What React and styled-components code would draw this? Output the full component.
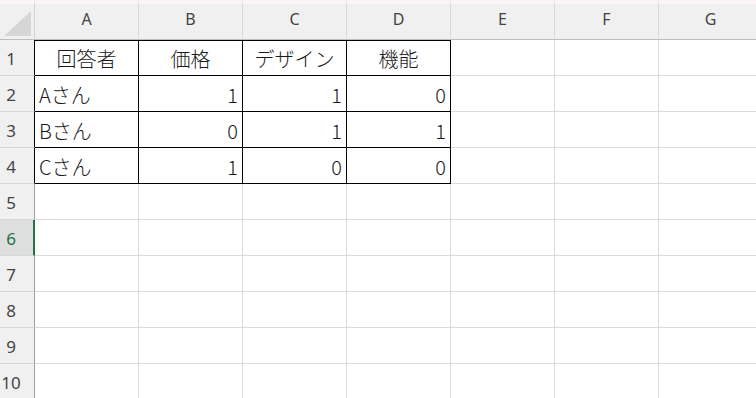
import React from "react";
import styled, { createGlobalStyle } from "styled-components";

const GlobalStyle = createGlobalStyle`
  html, body {
    margin: 0;
    padding: 0;
    background: #ffffff;
    overflow: hidden;
  }
  body {
    font-family: "Noto Sans CJK JP", "Noto Sans", sans-serif;
  }
`;

const COLS = ["A", "B", "C", "D", "E", "F", "G"];
const ROWS = 10;

// 表のデータ (A1:D4)
const data = [
  ["回答者", "価格", "デザイン", "機能"],
  ["Aさん", 1, 1, 0],
  ["Bさん", 0, 1, 1],
  ["Cさん", 1, 0, 0],
];

const SELECTED_ROW = 6;

export default function App() {
  return (
    <>
      <GlobalStyle />
      <Sheet>
        <Corner>
          <svg width="30" height="28" viewBox="0 0 30 28">
            <polygon points="29,2 29,27 2,27" fill="#d6d6d6" />
          </svg>
        </Corner>
        {COLS.map((c) => (
          <ColHead key={c}>{c}</ColHead>
        ))}
        {Array.from({ length: ROWS }, (_, r) => {
          const rowNo = r + 1;
          const inTable = r < data.length;
          return (
            <React.Fragment key={rowNo}>
              <RowHead $selected={rowNo === SELECTED_ROW} $dark={inTable}>
                {rowNo}
              </RowHead>
              {COLS.map((c, ci) => {
                const boxed = inTable && ci < 4;
                const value = boxed ? data[r][ci] : "";
                const align =
                  r === 0 ? "center" : typeof value === "number" ? "right" : "left";
                return (
                  <Cell
                    key={c}
                    $boxed={boxed}
                    $top={boxed && r === 0}
                    $align={align}
                  >
                    {value}
                  </Cell>
                );
              })}
            </React.Fragment>
          );
        })}
      </Sheet>
    </>
  );
}

const Sheet = styled.div`
  display: grid;
  grid-template-columns: 35px repeat(7, 104px);
  grid-template-rows: 40px repeat(10, 36px);
  width: 756px;
  height: 398px;
  overflow: hidden;
`;

const Corner = styled.div`
  background: #f0f0f0;
  border-top: 4px solid #f9f5f5;
  border-bottom: 1px solid #bdbdbd;
  border-right: 1px solid #d4d4d4;
  display: flex;
  align-items: flex-end;
  justify-content: flex-end;
  box-sizing: border-box;
  padding: 0 2px 2px 0;
`;

const ColHead = styled.div`
  background: #f0f0f0;
  border-top: 4px solid #f9f5f5;
  border-bottom: 1px solid #bdbdbd;
  border-right: 1px solid #dadada;
  box-sizing: border-box;
  display: flex;
  align-items: center;
  justify-content: center;
  padding-bottom: 5px;
  font-family: "Noto Sans", "Open Sans", sans-serif;
  font-size: 16px;
  color: #444444;
`;

const RowHead = styled.div`
  background: ${(p) => (p.$selected ? "#dedede" : "#f0f0f0")};
  color: ${(p) => (p.$selected ? "#217346" : "#444444")};
  border-bottom: 1px solid #d8d8d8;
  border-right: ${(p) =>
    p.$selected
      ? "2px solid #217346"
      : p.$dark
      ? "1px solid #000000"
      : "1px solid #9e9e9e"};
  box-sizing: border-box;
  display: flex;
  align-items: center;
  justify-content: center;
  padding-right: ${(p) => (p.$selected ? "11px" : "12px")};
  padding-top: 2px;
  font-family: "Noto Sans", "Open Sans", sans-serif;
  font-size: 17px;
`;

const Cell = styled.div`
  border-right: 1px solid ${(p) => (p.$boxed ? "#000000" : "#dcdcdc")};
  border-bottom: 1px solid ${(p) => (p.$boxed ? "#000000" : "#dcdcdc")};
  box-shadow: ${(p) => (p.$top ? "inset 0 1px 0 #000000" : "none")};
  box-sizing: border-box;
  display: flex;
  align-items: center;
  justify-content: ${(p) =>
    p.$align === "right" ? "flex-end" : p.$align === "center" ? "center" : "flex-start"};
  padding: 1px 4px 0 4px;
  font-size: 20px;
  font-weight: 300;
  color: #1a1a1a;
  white-space: nowrap;
  overflow: hidden;
`;
